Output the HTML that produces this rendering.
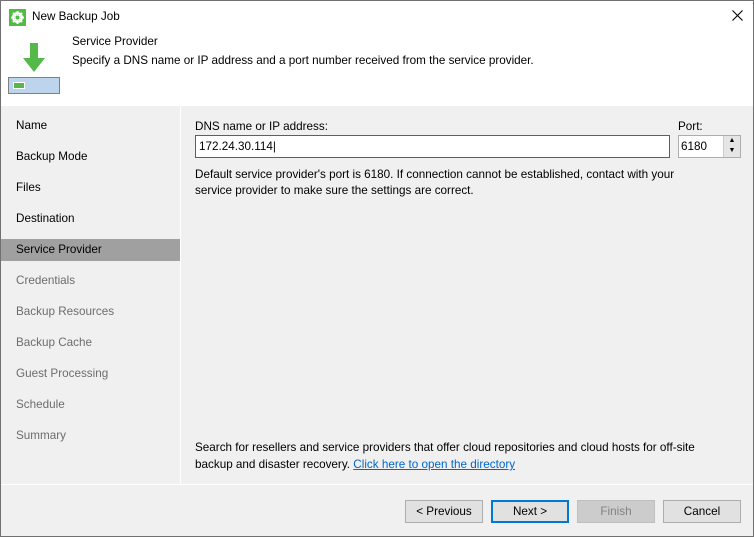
<!DOCTYPE html>
<html><head><style>
*{margin:0;padding:0;box-sizing:border-box}
body{width:754px;height:537px;overflow:hidden;font-family:"Liberation Sans",sans-serif;font-size:11.7px;color:#000;background:#fff}
.win{position:absolute;left:0;top:0;width:754px;height:537px;border:1px solid #707070;background:#f0f0f0}
.title{position:absolute;left:0;top:0;width:752px;height:105px;background:#fff}
.abs{position:absolute;white-space:nowrap}
.nav{position:absolute;left:0;top:105px;width:179px;height:378px}
.nav div{position:absolute;left:0;width:179px;height:22px;line-height:22px;padding-left:15px}
.dis{color:#6d6d6d}
.btn{position:absolute;top:499px;width:78px;height:23px;border:1px solid #adadad;background:#e1e1e1;text-align:center;line-height:21px}
</style></head><body>
<div class="win">
<div class="title">
 <svg class="abs" style="left:8px;top:8px" width="17" height="17" viewBox="0 0 17 17"><rect width="17" height="17" fill="#54b948"/><circle cx="8.5" cy="8.5" r="4.5" fill="none" stroke="#fff" stroke-width="2"/><g stroke="#fff" stroke-width="2"><line x1="8.5" y1="2" x2="8.5" y2="15"/><line x1="2" y1="8.5" x2="15" y2="8.5"/><line x1="4" y1="4" x2="13" y2="13"/><line x1="13" y1="4" x2="4" y2="13"/></g><circle cx="8.5" cy="8.5" r="2" fill="#54b948"/></svg>
 <div class="abs" style="left:31px;top:9px">New Backup Job</div>
 <svg class="abs" style="left:731px;top:9px" width="11" height="11" viewBox="0 0 11 11"><path d="M0.5 0.5L10.5 10.5M10.5 0.5L0.5 10.5" stroke="#000" stroke-width="1.1"/></svg>
 <svg class="abs" style="left:18px;top:42px" width="30" height="30" viewBox="0 0 30 30"><path d="M11 0h8v15h7l-11 14L4 15h7z" fill="#54b948"/></svg>
 <div class="abs" style="left:7px;top:76px;width:52px;height:17px;border:1px solid #808080;background:#bcd4ec"></div>
 <div class="abs" style="left:13px;top:82px;width:10px;height:5px;background:#54b948;outline:1px solid #fff"></div>
 <div class="abs" style="left:71px;top:34px">Service Provider</div>
 <div class="abs" style="left:71px;top:53px">Specify a DNS name or IP address and a port number received from the service provider.</div>
</div>
<div class="abs" style="left:179px;top:105px;width:1px;height:378px;background:#fff"></div>
<div class="abs" style="left:0;top:483px;width:752px;height:1px;background:#fff"></div>
<div class="nav">
 <div style="top:9px">Name</div>
 <div style="top:40px">Backup Mode</div>
 <div style="top:71px">Files</div>
 <div style="top:102px">Destination</div>
 <div style="top:133px;background:#a0a0a0">Service Provider</div>
 <div class="dis" style="top:164px">Credentials</div>
 <div class="dis" style="top:195px">Backup Resources</div>
 <div class="dis" style="top:226px">Backup Cache</div>
 <div class="dis" style="top:257px">Guest Processing</div>
 <div class="dis" style="top:288px">Schedule</div>
 <div class="dis" style="top:319px">Summary</div>
</div>
<div class="abs" style="left:194px;top:119px">DNS name or IP address:</div>
<div class="abs" style="left:194px;top:134px;width:475px;height:23px;border:1px solid #0078d7;background:#fff;padding:3px 3px;line-height:15px">172.24.30.114|</div>
<div class="abs" style="left:677px;top:119px">Port:</div>
<div class="abs" style="left:677px;top:134px;width:63px;height:23px;border:1px solid #adadad;background:#fff;padding:3px 2px;line-height:15px">6180</div>
<div class="abs" style="left:722px;top:135px;width:17px;height:21px;background:#e5e5e5;border-left:1px solid #ccc;font-size:7px;line-height:10px;text-align:center">▲<br>▼</div>
<div class="abs" style="left:194px;top:166px;line-height:16px">Default service provider's port is 6180. If connection cannot be established, contact with your<br>service provider to make sure the settings are correct.</div>
<div class="abs" style="left:194px;top:438px;line-height:17px">Search for resellers and service providers that offer cloud repositories and cloud hosts for off-site<br>backup and disaster recovery. <span style="color:#0066cc;text-decoration:underline">Click here to open the directory</span></div>
<div class="btn" style="left:404px">&lt; Previous</div>
<div class="btn" style="left:490px;border:2px solid #0078d7;line-height:19px">Next &gt;</div>
<div class="btn" style="left:576px;background:#cccccc;border-color:#bfbfbf;color:#838383">Finish</div>
<div class="btn" style="left:662px">Cancel</div>
</div>
</body></html>
